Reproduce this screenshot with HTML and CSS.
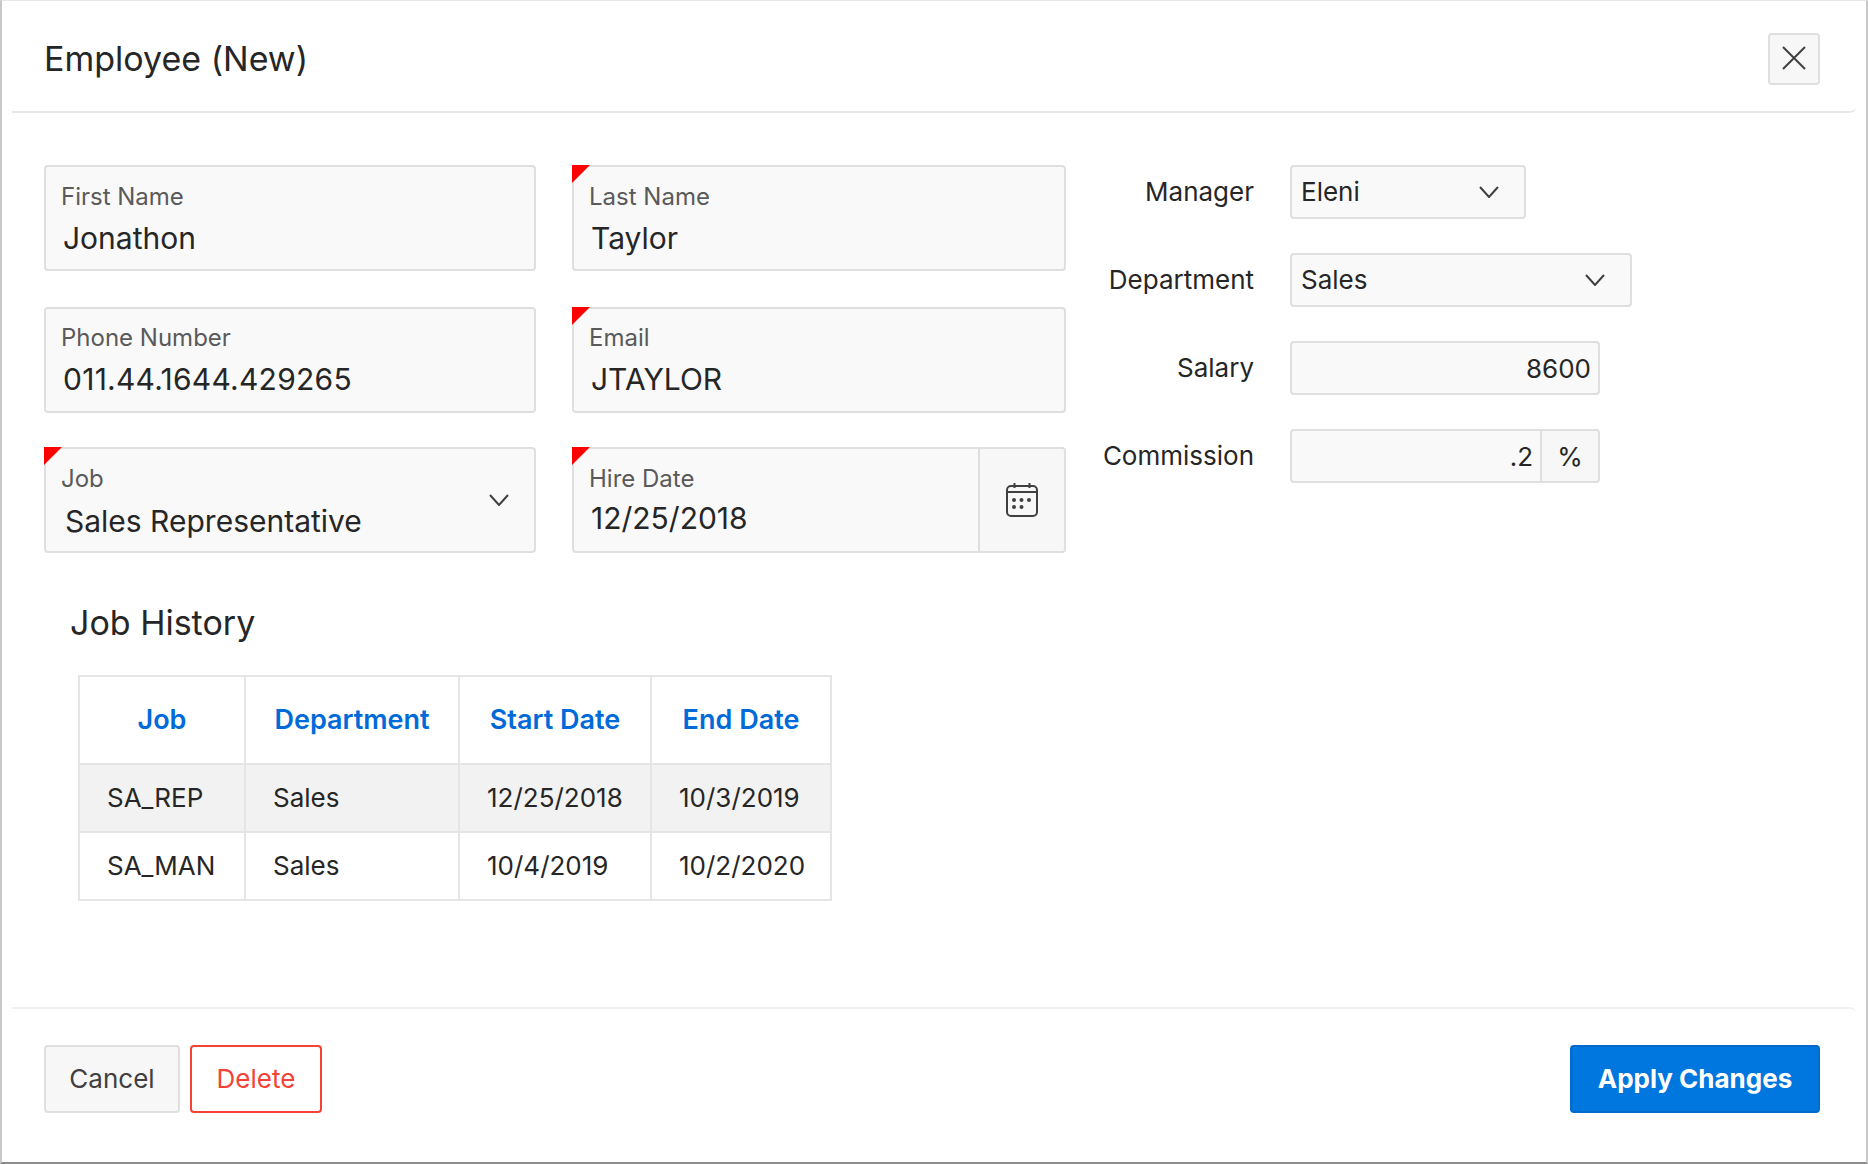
FILE: index.html
```html
<!DOCTYPE html>
<html lang="en">
<head>
    <meta charset="UTF-8">
    <meta name="viewport" content="width=device-width, initial-scale=1.0">
    <title>Employee (New)</title>
    <link rel="stylesheet" href="styles.css">
</head>
<body>
    <div class="dialog">
        <header class="dialog-header">
            <h1>Employee (New)</h1>
            <button class="close-btn" aria-label="Close">
                <svg width="24" height="24" viewBox="0 0 24 24" fill="none" stroke="#404040" stroke-width="2"><path d="M1 1l22 22M23 1L1 23"/></svg>
            </button>
        </header>

        <main class="dialog-body">
            <div class="form-area">
                <div class="float-fields">
                    <div class="field">
                        <label>First Name</label>
                        <span class="value">Jonathon</span>
                    </div>
                    <div class="field required">
                        <label>Last Name</label>
                        <span class="value">Taylor</span>
                    </div>
                    <div class="field">
                        <label>Phone Number</label>
                        <span class="value value-phone">011.44.1644.429265</span>
                    </div>
                    <div class="field required">
                        <label>Email</label>
                        <span class="value">JTAYLOR</span>
                    </div>
                    <div class="field required field-select">
                        <div class="field-main">
                            <label>Job</label>
                            <span class="value">Sales Representative</span>
                        </div>
                        <svg class="chevron" width="20" height="12" viewBox="0 0 20 12" fill="none" stroke="#404040" stroke-width="2"><path d="M1 1l9 10 9-10"/></svg>
                    </div>
                    <div class="field required field-date">
                        <div class="field-main">
                            <label>Hire Date</label>
                            <span class="value">12/25/2018</span>
                        </div>
                        <div class="date-btn">
                            <svg width="32" height="34" viewBox="0 0 32 34" fill="none" stroke="#404040" stroke-width="2">
                                <rect x="1" y="3" width="30" height="30" rx="4"/>
                                <path d="M1 9h30M8.5 0v5M23.5 0v5"/>
                                <g fill="#404040" stroke="none">
                                    <circle cx="8" cy="17" r="2"/><circle cx="15.500" cy="17" r="2"/><circle cx="23" cy="17" r="2"/>
                                    <circle cx="8" cy="24" r="2"/><circle cx="15.500" cy="24" r="2"/>
                                </g>
                            </svg>
                        </div>
                    </div>
                </div>

                <div class="side-fields">
                    <div class="side-row">
                        <label>Manager</label>
                        <div class="box box-manager">
                            <span>Eleni</span>
                            <svg width="20" height="12" viewBox="0 0 20 12" fill="none" stroke="#404040" stroke-width="2"><path d="M1 1l9 10 9-10"/></svg>
                        </div>
                    </div>
                    <div class="side-row">
                        <label>Department</label>
                        <div class="box box-dept">
                            <span>Sales</span>
                            <svg width="20" height="12" viewBox="0 0 20 12" fill="none" stroke="#404040" stroke-width="2"><path d="M1 1l9 10 9-10"/></svg>
                        </div>
                    </div>
                    <div class="side-row">
                        <label>Salary</label>
                        <div class="box box-number">
                            <span class="num">8600</span>
                        </div>
                    </div>
                    <div class="side-row">
                        <label>Commission</label>
                        <div class="box box-number box-post">
                            <span class="num">.2</span>
                            <span class="post">%</span>
                        </div>
                    </div>
                </div>
            </div>

            <section class="history">
                <h2>Job History</h2>
                <table>
                    <thead>
                        <tr>
                            <th class="col-job">Job</th>
                            <th class="col-dept">Department</th>
                            <th class="col-start">Start Date</th>
                            <th class="col-end">End Date</th>
                        </tr>
                    </thead>
                    <tbody>
                        <tr class="alt">
                            <td>SA_REP</td>
                            <td>Sales</td>
                            <td>12/25/2018</td>
                            <td>10/3/2019</td>
                        </tr>
                        <tr>
                            <td>SA_MAN</td>
                            <td>Sales</td>
                            <td>10/4/2019</td>
                            <td>10/2/2020</td>
                        </tr>
                    </tbody>
                </table>
            </section>
        </main>

        <footer class="dialog-footer">
            <div class="footer-left">
                <button class="btn btn-cancel">Cancel</button>
                <button class="btn btn-danger">Delete</button>
            </div>
            <button class="btn btn-primary">Apply Changes</button>
        </footer>
    </div>
</body>
</html>
```

FILE: styles.css
```css
* {
    box-sizing: border-box;
}
html, body {
    margin: 0;
    padding: 0;
    background-color: #ffffff;
}
body {
    font-family: Inter, "Liberation Sans", Arial, sans-serif;
    color: #262626;
}
.dialog {
    width: 1868px;
    height: 1164px;
    display: flex;
    flex-direction: column;
    background-color: #ffffff;
    border-top: 1px solid #e6e6e6;
    border-left: 2px solid #c8c8c8;
    border-right: 2px solid #c8c8c8;
    border-bottom: 2px solid #8c8c8c;
}
.dialog-header {
    height: 112px;
    margin: 0 10px;
    padding: 4px 36px 0 32px;
    display: flex;
    align-items: center;
    justify-content: space-between;
    border-bottom: 2px solid #e8e8e8;
    border-bottom-right-radius: 6px;
}
.dialog-header h1 {
    margin: 0;
    font-size: 34px;
    font-weight: 400;
}
.close-btn {
    width: 52px;
    height: 52px;
    padding: 0 0 2px;
    display: flex;
    align-items: center;
    justify-content: center;
    background-color: #f7f7f7;
    border: 2px solid #dfdfdf;
    border-radius: 4px;
    margin-top: 2px;
}
.dialog-body {
    flex: 1;
    padding: 52px 42px 0;
}
.form-area {
    display: flex;
}
.float-fields {
    display: grid;
    grid-template-columns: 492px 494px;
    grid-template-rows: 108px 106px 106px;
    column-gap: 36px;
    row-gap: 34px;
}
.field {
    position: relative;
    display: flex;
    flex-direction: column;
    padding: 16px 15px 0;
    background-color: #f9f9f9;
    border: 2px solid #dfdfdf;
    border-radius: 4px;
}
.field:nth-child(-n+2) {
    margin-bottom: 2px;
}
.field:nth-child(3), .field:nth-child(4) {
    padding-top: 15px;
}
.field.required::before {
    content: "";
    position: absolute;
    top: -2px;
    left: -2px;
    width: 18px;
    height: 18px;
    background-color: #ff0000;
    clip-path: polygon(0 0, 100% 0, 0 100%);
}
.field label {
    font-size: 24px;
    line-height: 28px;
    color: #5a5a5a;
}
.field .value {
    margin-top: 9px;
    margin-left: 2px;
    font-size: 30px;
    line-height: 36px;
    color: #262626;
}
.field .value-phone {
    letter-spacing: 0.25px;
}
.field-select, .field-date {
    flex-direction: row;
    align-items: stretch;
    padding: 0;
}
.field-main {
    flex: 1;
    display: flex;
    flex-direction: column;
    padding: 16px 15px 0;
}
.field-select {
    align-items: center;
    padding-right: 25px;
}
.field-select .field-main {
    align-self: stretch;
}
.field-select .value {
    margin-left: 4px;
    margin-top: 10px;
}
.field-date .value {
    margin-top: 7px;
}
.date-btn {
    width: 86px;
    padding-bottom: 1px;
    display: flex;
    align-items: center;
    justify-content: center;
    background-color: #f7f7f7;
    border-left: 2px solid #dfdfdf;
    border-radius: 0 4px 4px 0;
}
.side-fields {
    display: flex;
    flex-direction: column;
    gap: 34px;
}
.side-row {
    display: flex;
    align-items: center;
    height: 54px;
}
.side-row label {
    width: 188px;
    padding-bottom: 2px;
    text-align: right;
    font-size: 26px;
    color: #262626;
}
.box {
    height: 54px;
    margin-left: 36px;
    display: flex;
    align-items: center;
    justify-content: space-between;
    font-size: 26px;
    padding: 0 25px 0 9px;
    background-color: #f9f9f9;
    border: 2px solid #dfdfdf;
    border-radius: 4px;
}
.box-manager span, .box-dept span {
    padding-bottom: 2px;
}
.box-manager {
    width: 236px;
}
.box-dept {
    width: 342px;
}
.box-number {
    width: 310px;
    padding: 0 7px 0 0;
    justify-content: flex-end;
}
.box-post {
    padding: 0;
}
.box-post .num {
    flex: 1;
    text-align: right;
    padding-right: 7px;
}
.post {
    width: 58px;
    height: 100%;
    display: flex;
    align-items: center;
    justify-content: center;
    background-color: #f7f7f7;
    border-left: 2px solid #dfdfdf;
    border-radius: 0 4px 4px 0;
}
.history h2 {
    margin: 48px 0 30px 26px;
    font-size: 34px;
    line-height: 44px;
    font-weight: 400;
}
table {
    margin-left: 34px;
    border-collapse: collapse;
    table-layout: fixed;
    font-size: 26px;
}
th, td {
    padding: 0 0 2px 27px;
    border: 2px solid #e5e5e5;
    text-align: left;
    font-weight: 400;
}
th {
    height: 88px;
    padding: 0 0 2px;
    text-align: center;
    font-size: 27px;
    font-weight: 600;
    color: #006bd8;
}
td {
    height: 68px;
}
.alt td {
    background-color: #f2f2f2;
}
.col-job {
    width: 166px;
}
.col-dept {
    width: 214px;
}
.col-start {
    width: 192px;
}
.col-end {
    width: 180px;
}
.dialog-footer {
    height: 155px;
    margin: 0 10px;
    padding: 36px 36px 0 32px;
    display: flex;
    justify-content: space-between;
    align-items: flex-start;
    border-top: 2px solid #f2f2f2;
    border-top-right-radius: 6px;
}
.footer-left {
    display: flex;
    gap: 10px;
}
.btn {
    height: 68px;
    padding: 0 0 2px;
    font-family: inherit;
    font-size: 26px;
    color: #404040;
    background-color: #f7f7f7;
    border: 2px solid #dfdfdf;
    border-radius: 4px;
}
.btn-cancel {
    width: 136px;
}
.btn-danger {
    width: 132px;
    color: #f44336;
    background-color: #ffffff;
    border-color: #f44336;
}
.btn-primary {
    width: 250px;
    font-weight: 700;
    color: #ffffff;
    background-color: #0076df;
    border-color: #006bca;
}
```
